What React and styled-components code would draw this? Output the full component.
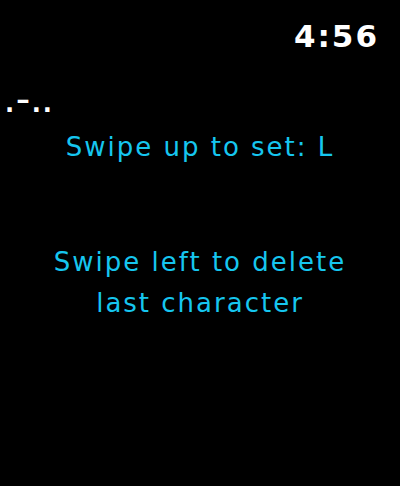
import React from "react";
import styled, { createGlobalStyle } from "styled-components";

const GlobalStyle = createGlobalStyle`
    html, body {
        margin: 0;
        padding: 0;
        background: #000;
    }
    body {
        font-family: "DejaVu Sans", Inter, sans-serif;
        -webkit-font-smoothing: antialiased;
    }
`;

const Screen = styled.div`
    width: 400px;
    height: 486px;
    background: #000;
    display: flex;
    flex-direction: column;
    overflow: hidden;
`;

const StatusBar = styled.div`
    display: flex;
    justify-content: flex-end;
    padding: 16px 21px 0 0;
    height: 48px;
`;

const Time = styled.span`
    color: #fff;
    font-size: 31px;
    font-weight: 700;
    line-height: 40px;
    letter-spacing: 2px;
`;

const Morse = styled.div`
    color: #fff;
    font-size: 24px;
    font-weight: 700;
    line-height: 30px;
    padding-left: 5px;
    margin-top: 25px;
    letter-spacing: 2px;
`;

// the dash sits higher than the dots in the reference
const Dash = styled.span`
    font-size: 27px;
    line-height: 0;
    vertical-align: 3px;
`;

const Hint = styled.p`
    margin: ${(p) => p.$top || 0}px 0 0;
    color: #16c6ef;
    font-size: 26px;
    font-weight: 400;
    line-height: 41px;
    text-align: center;
    letter-spacing: 2px;
`;

function App() {
    return (
        <Screen>
            <GlobalStyle />
            <StatusBar>
                <Time>4:56</Time>
            </StatusBar>
            <Morse>
                .<Dash>–</Dash>..
            </Morse>
            <Hint $top={8}>Swipe up to set: L</Hint>
            <Hint $top={74}>
                Swipe left to delete
                <br />
                last character
            </Hint>
        </Screen>
    );
}

export default App;
